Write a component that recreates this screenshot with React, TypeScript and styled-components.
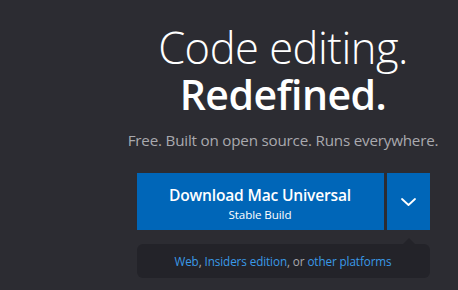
import * as React from "react";
import styled, { createGlobalStyle } from "styled-components";

const GlobalStyle = createGlobalStyle`
    html, body {
        margin: 0;
        padding: 0;
        background: #2c2c32;
    }
    body {
        font-family: "Open Sans", "Noto Sans", sans-serif;
        -webkit-font-smoothing: antialiased;
    }
`

export default function App() {
    return (
        <>
            <GlobalStyle />
            <Hero>
                <Column>
                    <Title>
                        <LightLine>Code editing.</LightLine>
                        <BoldLine>Redefined.</BoldLine>
                    </Title>
                    <Tagline>Free. Built on open source. Runs everywhere.</Tagline>

                    <ButtonGroup>
                        <MainButton>
                            <ButtonTitle>Download Mac Universal</ButtonTitle>
                            <ButtonSub>Stable Build</ButtonSub>
                        </MainButton>
                        <ArrowButton aria-label="More downloads">
                            <svg width="15" height="8" viewBox="0 0 15 8" fill="none">
                                <path d="M1 1l6.5 6 6.5-6" stroke="#fff" strokeWidth="1.8" strokeLinecap="round" strokeLinejoin="round" />
                            </svg>
                        </ArrowButton>
                    </ButtonGroup>

                    <Platforms>
                        <Link>Web</Link>, <Link>Insiders edition</Link>, or <Link>other platforms</Link>
                    </Platforms>
                </Column>
            </Hero>
        </>
    );
}

const Hero = styled.div`
    display: flex;
    justify-content: flex-end;
    width: 458px;
    height: 290px;
    padding-right: 19px;
    box-sizing: border-box;
    overflow: hidden;
`

const Column = styled.div`
    display: flex;
    flex-direction: column;
    align-items: center;
    width: 312px;
    padding-top: 24px;
`

const Title = styled.h1`
    margin: 0;
    display: flex;
    flex-direction: column;
    align-items: center;
    color: #ffffff;
    letter-spacing: -0.5px;
`

const LightLine = styled.span`
    font-size: 43.5px;
    line-height: 47px;
    font-weight: 300;
`

const BoldLine = styled.span`
    font-size: 41px;
    line-height: 47px;
    font-weight: 600;
`

const Tagline = styled.p`
    margin: 12px 0 0;
    color: #a9a9ae;
    font-size: 15.2px;
    line-height: 20px;
    letter-spacing: -0.2px;
    white-space: nowrap;
`

const ButtonGroup = styled.div`
    display: flex;
    gap: 3px;
    margin-top: 23px;
    width: 293px;
    height: 57px;
`

const MainButton = styled.button`
    flex: 1;
    display: flex;
    flex-direction: column;
    align-items: center;
    justify-content: center;
    border: none;
    background: #0066b8;
    color: #fff;
    font-family: inherit;
    padding: 4px 0 0;
    cursor: pointer;
`

const ButtonTitle = styled.span`
    font-size: 15.6px;
    font-weight: 600;
    line-height: 22px;
    letter-spacing: -0.2px;
`

const ButtonSub = styled.span`
    font-size: 11.6px;
    line-height: 18px;
    letter-spacing: -0.1px;
`

const ArrowButton = styled.button`
    width: 43px;
    display: flex;
    align-items: center;
    justify-content: center;
    border: none;
    background: #0066b8;
    padding: 0;
    cursor: pointer;
`

const Platforms = styled.div`
    position: relative;
    margin-top: 14px;
    width: 293px;
    height: 34px;
    display: flex;
    align-items: center;
    justify-content: center;
    box-sizing: border-box;
    background: #232329;
    border-radius: 6px;
    color: #a9a9ae;
    font-size: 11.7px;
    white-space: pre;
    letter-spacing: -0.1px;

    &::before {
        content: "";
        position: absolute;
        top: -6px;
        right: 15px;
        border-left: 6px solid transparent;
        border-right: 6px solid transparent;
        border-bottom: 6px solid #232329;
    }
`

const Link = styled.span`
    color: #3a9ae8;
    cursor: pointer;
`
